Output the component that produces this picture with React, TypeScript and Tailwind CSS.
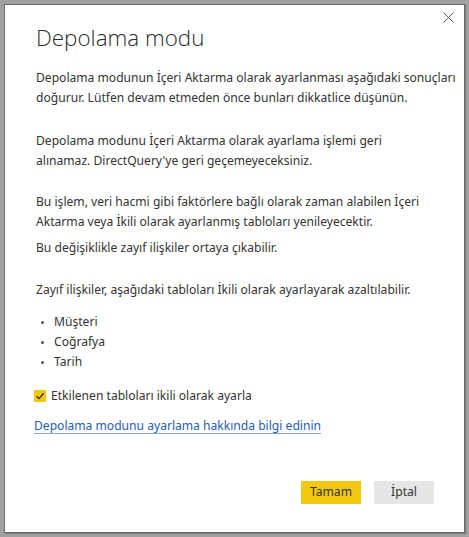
import React from "react";

export default function App() {
  const font = { fontFamily: '"Noto Sans", "Open Sans", sans-serif' };
  return (
    <div className="w-[469px] h-[537px] bg-[#a0a0a0] pl-[4px] pt-[4px]" style={font}>
      <div className="relative w-[461px] h-[529px] bg-white border border-[#6b6b6b] shadow-[1px_1px_0_#7a7a7a] flex flex-col pl-[31px] pr-[30px] text-[#333333]">
        <button className="absolute left-[438px] top-[7px] w-[11px] h-[11px]" aria-label="Kapat">
          <svg width="11" height="11" viewBox="0 0 11 11" className="block">
            <path d="M0.5 0.5 L10.5 10.5 M10.5 0.5 L0.5 10.5" stroke="#5a5a5a" strokeWidth="1" />
          </svg>
        </button>
        <h1 className="mt-[17px] text-[22.4px] leading-[32px] font-light text-[#2b2b2b] whitespace-nowrap" style={{ fontFamily: '"Open Sans", "Noto Sans", sans-serif' }}>
          Depolama modu
        </h1>
        <div className="text-[12.1px] leading-[20px] whitespace-nowrap">
          <p className="mt-[14px]">
            <span className="block">Depolama modunun İçeri Aktarma olarak ayarlanması aşağıdaki sonuçları</span>
            <span className="block">doğurur. Lütfen devam etmeden önce bunları dikkatlice düşünün.</span>
          </p>
          <p className="mt-[23px]">
            <span className="block">Depolama modunu İçeri Aktarma olarak ayarlama işlemi geri</span>
            <span className="block">alınamaz. DirectQuery'ye geri geçemeyeceksiniz.</span>
          </p>
          <p className="mt-[21px]">
            <span className="block">Bu işlem, veri hacmi gibi faktörlere bağlı olarak zaman alabilen İçeri</span>
            <span className="block">Aktarma veya İkili olarak ayarlanmış tabloları yenileyecektir.</span>
          </p>
          <p className="mt-[6px]">Bu değişiklikle zayıf ilişkiler ortaya çıkabilir.</p>
          <p className="mt-[22px]">Zayıf ilişkiler, aşağıdaki tabloları İkili olarak ayarlayarak azaltılabilir.</p>
          <ul className="mt-[12px] pl-[4px]">
            {["Müşteri", "Coğrafya", "Tarih"].map((t) => (
              <li key={t} className="flex items-center">
                <span className="w-[3px] h-[3px] rounded-full bg-[#555] mr-[10px] ml-[1px]" />
                <span>{t}</span>
              </li>
            ))}
          </ul>
          <label className="mt-[14px] flex items-center -ml-[2px]">
            <span className="w-[12px] h-[12px] bg-[#f2c811] flex items-center justify-center mr-[5px]">
              <svg width="10" height="10" viewBox="0 0 10 10">
                <path d="M1.5 5.2 L4 7.6 L8.6 2.2" fill="none" stroke="#333" strokeWidth="1.4" />
              </svg>
            </span>
            <span>Etkilenen tabloları ikili olarak ayarla</span>
          </label>
          <a href="#" className="mt-[10px] -ml-[2px] block w-fit text-[#1f5eb0] underline decoration-[#8aa6d6] underline-offset-[3px]">
            Depolama modunu ayarlama hakkında bilgi edinin
          </a>
        </div>
        <div className="mt-auto mb-[28px] flex justify-end gap-[13px] text-[12.1px]">
          <button className="w-[60px] h-[23px] bg-[#f2c811] text-[#333]">Tamam</button>
          <button className="w-[60px] h-[23px] bg-[#e6e6e6] text-[#333]">İptal</button>
        </div>
      </div>
    </div>
  );
}
